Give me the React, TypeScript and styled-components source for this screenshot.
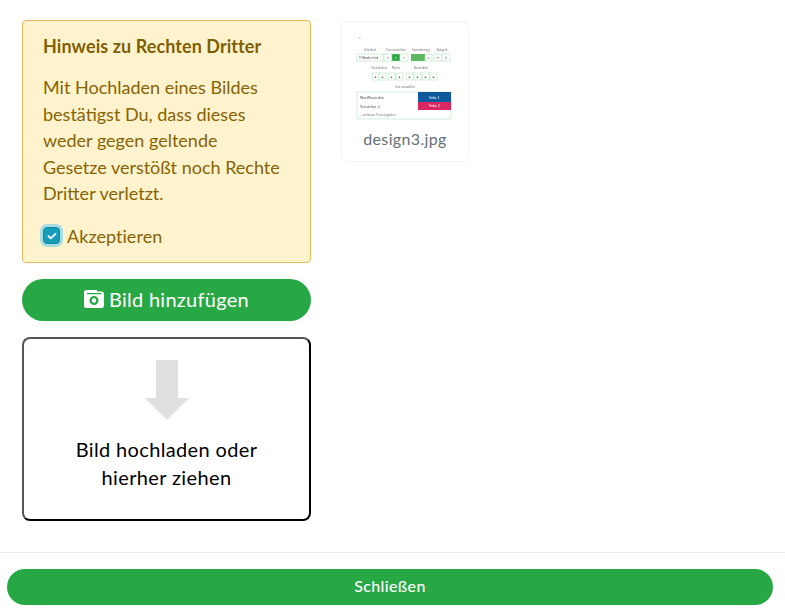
import React from "react";
import styled, { createGlobalStyle } from "styled-components";

const Global = createGlobalStyle`
  html, body { margin: 0; padding: 0; background: #fff; }
  body { font-family: "Lato", "Noto Sans", "Liberation Sans", sans-serif; }
  * { box-sizing: border-box; }
`;

const Page = styled.div`
  width: 785px;
  height: 616px;
  display: flex;
  flex-direction: column;
  overflow: hidden;
`;

const Body = styled.main`
  height: 552px;
  padding: 20px 0 0 22px;
  display: flex;
  align-items: flex-start;
  gap: 30px;
`;

const LeftColumn = styled.section`
  width: 289px;
  display: flex;
  flex-direction: column;
`;

const Notice = styled.div`
  height: 243px;
  padding: 14px 20px 0 20px;
  background: #fff3cd;
  border: 1px solid #e3bb5c;
  border-radius: 4px;
  color: #856404;
`;

const NoticeTitle = styled.h4`
  margin: 0;
  font-size: 18px;
  line-height: 22px;
  font-weight: 700;
  letter-spacing: 0.07px;
  color: #7f5f04;
`;

const NoticeText = styled.p`
  margin: 17px 0 0;
  font-size: 18px;
  line-height: 26.5px;
`;

const AcceptRow = styled.label`
  margin-top: 16px;
  margin-left: -1px;
  display: flex;
  align-items: center;
  gap: 7px;
  font-size: 18px;
  line-height: 26px;
  letter-spacing: 0.05px;
`;

const CheckBox = styled.span`
  width: 17px;
  height: 17px;
  border-radius: 4px;
  background: #189db8;
  border: 1px solid #1289a3;
  box-shadow: 0 0 0 3px #a9dde2;
  display: flex;
  align-items: center;
  justify-content: center;
  margin-left: 1px;
`;

const AddButton = styled.button`
  margin-top: 16px;
  height: 42px;
  padding: 0 0 2px;
  border: 0;
  border-radius: 21px;
  background: #28a745;
  color: #fff;
  font-family: inherit;
  font-size: 20px;
  display: flex;
  align-items: center;
  justify-content: center;
  gap: 5px;
  letter-spacing: 0.26px;
`;

const DropZone = styled.div`
  margin-top: 16px;
  height: 184px;
  border-width: 2px;
  border-style: solid;
  border-color: #555 #000 #000 #555;
  border-radius: 8px;
  display: flex;
  flex-direction: column;
  align-items: center;
  padding-top: 21px;
`;

const DropText = styled.div`
  margin-top: 15px;
  width: 220px;
  text-align: center;
  font-size: 20px;
  line-height: 28px;
  letter-spacing: 0.36px;
  color: #000;
`;

const FileCard = styled.figure`
  margin: 1px 0 0;
  width: 128px;
  height: 141px;
  border: 1px solid #f3f4f5;
  border-radius: 6px;
  display: flex;
  flex-direction: column;
  align-items: center;
`;

const FileName = styled.figcaption`
  margin-top: 5px;
  font-size: 16px;
  line-height: 20px;
  font-weight: 400;
  color: #666f77;
  letter-spacing: 0.35px;
`;

const Thumb = styled.svg`
  display: block;
  margin-top: 10px;
  filter: blur(0.35px);
`;

const Footer = styled.footer`
  flex: 1;
  border-top: 1px solid #e9ecef;
  padding: 16px 12px 0 7px;
`;

const CloseButton = styled.button`
  width: 100%;
  height: 36px;
  padding: 0 0 3px;
  border: 0;
  border-radius: 18px;
  background: #28a745;
  color: #fff;
  font-family: inherit;
  font-size: 16px;
  font-weight: 500;
  letter-spacing: 0.36px;
`;

const GreenCell = ({ x, y, w, h = 7, on, glyph }: { x: number; y: number; w: number; h?: number; on?: boolean; glyph?: string }) => (
  <g>
    <rect x={x} y={y} width={w} height={h} fill={on ? "#28a745" : "#fff"} stroke="#a5dcae" strokeWidth={0.5} />
    {glyph ? (
      <text x={x + w / 2} y={y + h - 2} fontSize={3.4} fill={on ? "#fff" : "#666"} fontFamily="Lato, sans-serif" textAnchor="middle">{glyph}</text>
    ) : null}
  </g>
);

const Label = ({ x, y, children }: { x: number; y: number; children: React.ReactNode }) => (
  <text x={x} y={y} fontSize={3} fill="#777" fontFamily="Lato, sans-serif" textAnchor="middle">{children}</text>
);

const Thumbnail = () => (
  <Thumb width="110" height="92" viewBox="0 0 110 92">
    <text x="9" y="7" fontSize="3" fill="#999">x</text>
    <Label x={20} y={19}>Schriftart</Label>
    <Label x={46} y={19}>Text ausrichten</Label>
    <Label x={71} y={19}>Formatierung</Label>
    <Label x={92} y={19}>Spiegeln</Label>
    <GreenCell x={7} y={22} w={26} />
    <text x="9" y="27" fontSize="3.2" fill="#444">Ti Roofer Link</text>
    <GreenCell x={34} y={22} w={8} glyph="≡" />
    <GreenCell x={42} y={22} w={8} on glyph="≡" />
    <GreenCell x={50} y={22} w={8} glyph="≡" />
    <rect x={61} y={22} width={14} height={7} fill="#5cb85c" />
    <GreenCell x={75} y={22} w={7} glyph="u" />
    <GreenCell x={84} y={22} w={8} glyph="↔" />
    <GreenCell x={92} y={22} w={8} glyph="↕" />
    <Label x={29} y={37}>Drehbarkeit</Label>
    <Label x={46} y={37}>Fläche</Label>
    <Label x={71} y={37}>Randstärke</Label>
    {[22, 29, 38, 46, 56, 64, 72, 80].map((x) => (
      <GreenCell key={x} x={x} y={41} w={7} glyph="▲" />
    ))}
    <Label x={55} y={56}>Text auswählen</Label>
    <rect x="7" y="60" width="94" height="27" fill="#fff" stroke="#a5dcae" strokeWidth="0.5" />
    <text x="10" y="66.500" fontSize="3.2" fill="#444">Was Wisetu dein</text>
    <text x="10" y="75.500" fontSize="3.2" fill="#444">Text stehen ;-)</text>
    <text x="10" y="84" fontSize="3.2" fill="#777">... weiteren Text eingeben</text>
    <rect x="68" y="60" width="33" height="10" fill="#0f5a9c" />
    <rect x="68" y="70" width="33" height="8" fill="#d8285f" />
    <text x="84.500" y="66.500" fontSize="3.2" fill="#fff" textAnchor="middle">Farbe 1</text>
    <text x="84.500" y="75" fontSize="3.2" fill="#fff" textAnchor="middle">Farbe 2</text>
  </Thumb>
);

export default function App() {
  return (
    <Page>
      <Global />
      <Body>
        <LeftColumn>
          <Notice>
            <NoticeTitle>Hinweis zu Rechten Dritter</NoticeTitle>
            <NoticeText>
              Mit Hochladen eines Bildes<br />
              bestätigst Du, dass dieses<br />
              weder gegen geltende<br />
              Gesetze verstößt noch Rechte<br />
              Dritter verletzt.
            </NoticeText>
            <AcceptRow>
              <CheckBox>
                <svg width="10" height="8" viewBox="0 0 10 8">
                  <path d="M1.5 4.200 L3.800 6.300 L8.500 1.800" fill="none" stroke="#fff" strokeWidth="1.800" strokeLinecap="round" strokeLinejoin="round" />
                </svg>
              </CheckBox>
              Akzeptieren
            </AcceptRow>
          </Notice>
          <AddButton>
            <svg width="20" height="18" viewBox="0 0 20 18">
              <path fillRule="evenodd" fill="#fff" d="M2.500 0 H13 V1.500 H17.500 A2.500 2.500 0 0 1 20 4 V15.500 A2.500 2.500 0 0 1 17.500 18 H2.500 A2.500 2.500 0 0 1 0 15.500 V2.500 A2.500 2.500 0 0 1 2.500 0 Z M10 6 A4.500 4.500 0 1 0 10 15 A4.500 4.500 0 0 0 10 6 Z M10 8.300 A2.200 2.200 0 1 1 10 12.700 A2.200 2.200 0 0 1 10 8.300 Z M2.800 3 V4.300 H17.200 V3 Z" />
            </svg>
            Bild hinzufügen
          </AddButton>
          <DropZone>
            <svg width="46" height="60" viewBox="0 0 46 60">
              <path d="M12 0 H34 V38 H45 L23 60 L1 38 H12 Z" fill="#e0e0e0" />
            </svg>
            <DropText>Bild hochladen oder hierher ziehen</DropText>
          </DropZone>
        </LeftColumn>
        <FileCard>
          <Thumbnail />
          <FileName>design3.jpg</FileName>
        </FileCard>
      </Body>
      <Footer>
        <CloseButton>Schließen</CloseButton>
      </Footer>
    </Page>
  );
}
